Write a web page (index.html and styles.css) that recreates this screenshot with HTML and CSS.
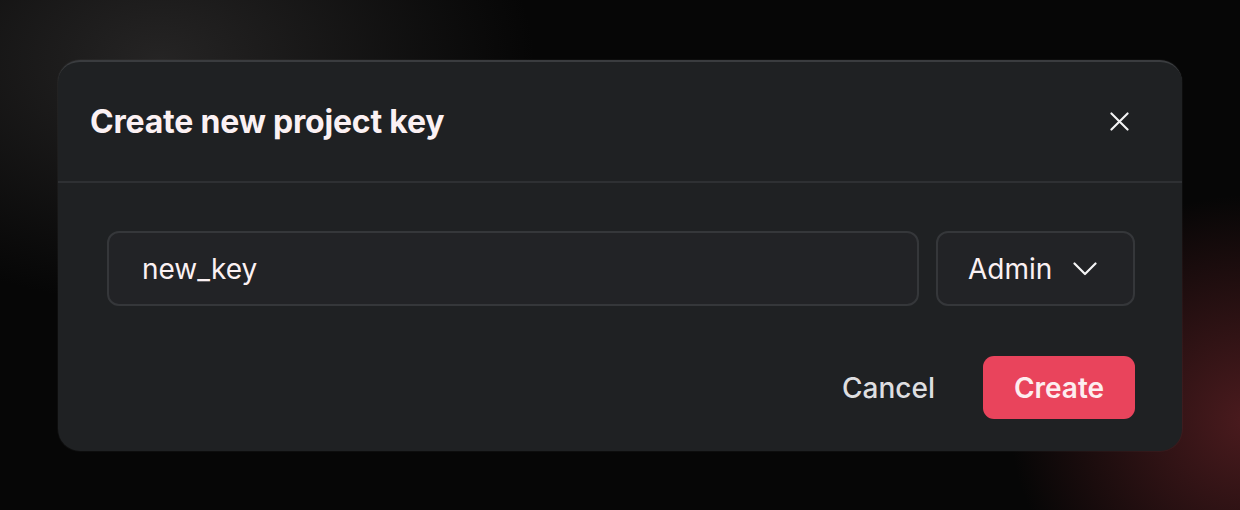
FILE: index.html
```html
<!DOCTYPE html>
<html>
<head>
<meta charset="utf-8">
<link rel="stylesheet" href="styles.css">
</head>
<body>
<div class="backdrop">
  <div class="modal">
    <div class="modal-header">
      <h2 class="title">Create new project key</h2>
      <button class="close" aria-label="Close">
        <svg width="20" height="20" viewBox="0 0 20 20" fill="none" stroke="#f4f4f5" stroke-width="2.2" stroke-linecap="round"><path d="M1.5 1.5L18.5 18.5M18.5 1.5L1.5 18.5"/></svg>
      </button>
    </div>
    <div class="modal-body">
      <div class="fields">
        <div class="input">new_key</div>
        <div class="select">
          <span>Admin</span>
          <svg width="24" height="14" viewBox="0 0 24 14" fill="none" stroke="#f4f4f5" stroke-width="2.2" stroke-linecap="round" stroke-linejoin="round"><path d="M1.5 1.5L12 12L22.5 1.5"/></svg>
        </div>
      </div>
      <div class="actions">
        <button class="btn-cancel">Cancel</button>
        <button class="btn-create">Create</button>
      </div>
    </div>
  </div>
</div>
</body>
</html>
```
FILE: styles.css
```css
* { box-sizing: border-box; }
html, body { margin: 0; height: 100%; }
body {
  font-family: Inter, "Noto Sans", sans-serif;
  background:
    radial-gradient(ellipse 520px 340px at 160px 60px, rgba(58,56,56,0.6), rgba(0,0,0,0) 72%),
    radial-gradient(ellipse 320px 300px at 1250px 420px, rgba(92,32,36,0.8), rgba(0,0,0,0) 75%),
    #060606;
  overflow: hidden;
}
.backdrop {
  padding: 60px 58px 0 58px;
  width: 1240px;
  height: 510px;
}
.modal {
  width: 1124px;
  height: 391px;
  background: #1f2123;
  border-radius: 22px;
  border-top: 2px solid #3a3c3f;
  box-shadow: 0 0 0 1px rgba(255,255,255,0.03);
  display: flex;
  flex-direction: column;
}
.modal-header {
  height: 121px;
  border-bottom: 2px solid #2e3033;
  display: flex;
  align-items: center;
  justify-content: space-between;
  padding: 0 43px 0 32px;
}
.title {
  margin: 0;
  color: #fbf1f3;
  font-size: 32px;
  font-weight: 700;
  letter-spacing: -0.2px;
}
.close {
  background: none;
  border: 0;
  padding: 0;
  width: 40px;
  height: 40px;
  display: flex;
  align-items: center;
  justify-content: center;
  cursor: pointer;
}
.close svg { width: 19px; height: 19px; }
.modal-body {
  padding: 48px 47px 32px 49px;
  display: flex;
  flex-direction: column;
  gap: 49px;
}
.fields {
  display: flex;
  gap: 17px;
}
.input, .select {
  height: 75px;
  border: 2px solid #35373a;
  border-radius: 12px;
  background: #222326;
  color: #fbf1f3;
  font-size: 28px;
  display: flex;
  align-items: center;
}
.input {
  flex: 1;
  padding-left: 33px;
}
.select {
  width: 199px;
  padding: 0 36px 0 30px;
  justify-content: space-between;
}
.actions {
  display: flex;
  justify-content: flex-end;
  align-items: center;
  gap: 48px;
}
.btn-cancel {
  background: none;
  border: 0;
  color: #dedee0;
  font-family: inherit;
  font-size: 28px;
  font-weight: 500;
  padding: 0;
  margin-top: 2px;
}
.btn-create {
  width: 152px;
  height: 63px;
  margin-top: 1px;
  border: 0;
  border-radius: 11px;
  background: #e9445c;
  color: #fdeef0;
  font-family: inherit;
  font-size: 28px;
  font-weight: 600;
}
```
